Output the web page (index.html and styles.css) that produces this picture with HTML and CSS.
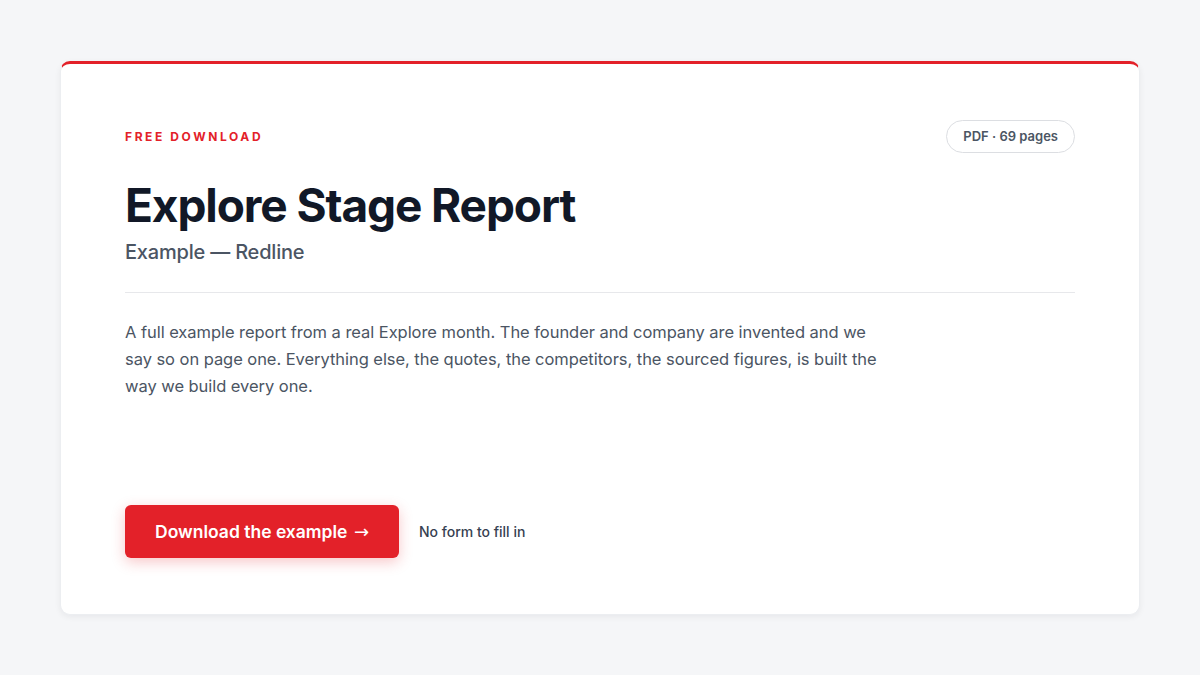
FILE: index.html
```html
<!DOCTYPE html>
<html lang="en">
<head>
    <meta charset="UTF-8">
    <meta name="viewport" content="width=device-width, initial-scale=1.0">
    <title>Explore Stage Report</title>
    <link rel="stylesheet" href="styles.css">
</head>
<body>
    <main class="page">
        <section class="report-card">
            <div class="report-head">
                <span class="eyebrow">FREE DOWNLOAD</span>
                <span class="pill">PDF · 69 pages</span>
            </div>

            <h1 class="report-title">Explore Stage Report</h1>
            <p class="report-subtitle">Example — Redline</p>

            <hr class="divider">

            <p class="report-desc">A full example report from a real Explore month. The founder and company are invented and we say so on page one. Everything else, the quotes, the competitors, the sourced figures, is built the way we build every one.</p>

            <div class="actions">
                <a href="#" class="btn">Download the example <span class="arrow">→</span></a>
                <span class="note">No form to fill in</span>
            </div>
        </section>
    </main>
</body>
</html>
```

FILE: styles.css
```css
:root {
    --color-primary: #e32129;
    --color-heading: #111827;
    --color-text: #4b5563;
    --color-background: #f5f6f8;
    --color-line: #e7e8eb;
}

* {
    box-sizing: border-box;
}

body {
    font-family: 'Inter', 'Noto Sans', sans-serif;
    margin: 0;
    padding: 0;
    background-color: var(--color-background);
    color: var(--color-text);
}

.page {
    min-height: 675px;
    display: flex;
    align-items: center;
    justify-content: center;
    padding: 60px;
}

.report-card {
    width: 1080px;
    min-height: 554px;
    display: flex;
    flex-direction: column;
    background-color: white;
    border: 1px solid #eceef1;
    border-top: 3px solid var(--color-primary);
    border-radius: 10px;
    padding: 56px 64px 56px;
    box-shadow: 0 2px 6px rgba(17, 24, 39, 0.06);
}

.report-head {
    display: flex;
    justify-content: space-between;
    align-items: center;
}

.eyebrow {
    color: var(--color-primary);
    font-size: 12px;
    font-weight: 700;
    letter-spacing: 2.6px;
}

.pill {
    border: 1px solid #dcdee2;
    border-radius: 999px;
    padding: 7px 16px;
    font-size: 13px;
    font-weight: 600;
    color: var(--color-text);
    line-height: 17px;
}

.report-title {
    margin: 24px 0 0;
    font-size: 46px;
    line-height: 56px;
    font-weight: 700;
    letter-spacing: -1.1px;
    color: var(--color-heading);
}

.report-subtitle {
    margin: 5px 0 0;
    font-size: 20px;
    line-height: 28px;
    font-weight: 500;
    letter-spacing: -0.2px;
}

.divider {
    border: none;
    border-top: 1px solid var(--color-line);
    margin: 26px 0 26px;
}

.report-desc {
    margin: 0;
    max-width: 760px;
    font-size: 16.5px;
    line-height: 27px;
    letter-spacing: -0.05px;
}

.actions {
    margin-top: auto;
    display: flex;
    align-items: center;
    gap: 20px;
}

.btn {
    display: inline-block;
    background-color: var(--color-primary);
    color: white;
    padding: 15px 30px;
    border-radius: 6px;
    font-size: 17.5px;
    line-height: 23px;
    font-weight: 600;
    letter-spacing: 0;
    text-decoration: none;
    box-shadow: 0 4px 14px rgba(227, 33, 41, 0.25);
}

.arrow {
    font-family: 'DejaVu Sans', sans-serif;
    font-weight: 400;
    font-size: 18px;
    margin-left: 2px;
}

.note {
    font-size: 14px;
    font-weight: 500;
    color: #374151;
}
```
